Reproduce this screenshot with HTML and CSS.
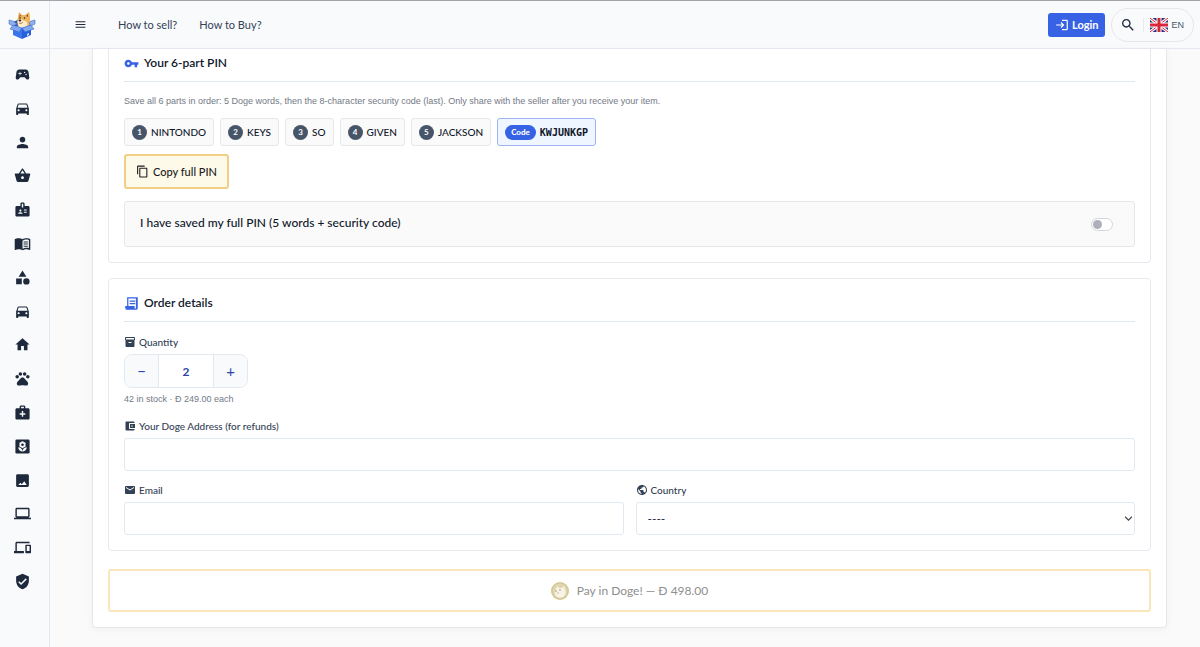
FILE: index.html
```html
<!DOCTYPE html>
<html lang="en">
<head>
    <meta charset="UTF-8">
    <meta name="viewport" content="width=device-width, initial-scale=1.0">
    <title>Checkout</title>
    <link rel="stylesheet" href="styles.css">
</head>
<body>
    <header class="topbar">
        <a class="logo" href="#" aria-label="Home">
            <svg viewBox="0 0 28 28">
                <path d="M5 11l9-4 9 4v4H5z" fill="#2b5bb8"/>
                <path d="M10 15c-1-3-1-6 0-9l1-5 3 3h3l4-3c1 3 1 5 1 8 1 2 0 5-1 7z" fill="#f0b55c"/>
                <path d="M12 3l1 2-2 1zM20 3l-2 2 2 1z" fill="#8a5527"/>
                <path d="M10 13c-1-2 0-4 2-5 2 0 3 2 5 2s3 3 2 6h-8z" fill="#fdeccb"/>
                <circle cx="12" cy="7" r=".8" fill="#222"/>
                <circle cx="16.500" cy="7" r=".8" fill="#222"/>
                <ellipse cx="12" cy="9.500" rx="1.300" ry=".9" fill="#222"/>
                <path d="M11 12c2 1 3 0 4-1" fill="none" stroke="#7a4a22" stroke-width=".7"/>
                <path d="M5 10L1 9l0 4 4 2 4-2zM23 10l4-1 0 4-4 2-2-3z" fill="#8fb0ea" stroke="#2f5fc4" stroke-width=".5"/>
                <path d="M5 14l9 3v11l-9-4z" fill="#3b74ec"/>
                <path d="M23 14l-9 3v11l9-4z" fill="#2860dc"/>
                <path d="M5 14l9 3-3 4-9-3zM23 14l-9 3 3 4 9-3z" fill="#7fa6f0" stroke="#2f5fc4" stroke-width=".5"/>
                <path d="M19 23l2-1v2l-2 1z" fill="#cfe0ff"/>
            </svg>
        </a>
        <button class="menu-btn" type="button" aria-label="Menu">
            <svg viewBox="0 0 24 24"><path d="M3 18h18v-2H3v2zm0-5h18v-2H3v2zm0-7v2h18V6H3z"/></svg>
        </button>
        <nav class="links">
            <a href="#">How to sell?</a>
            <a href="#">How to Buy?</a>
        </nav>
        <a class="login" href="#">
            <svg viewBox="0 0 24 24"><path d="M11 7L9.600 8.400l2.600 2.600H2v2h10.200l-2.600 2.600L11 17l5-5-5-5zm9 12h-8v2h8c1.100 0 2-.9 2-2V5c0-1.100-.9-2-2-2h-8v2h8v14z"/></svg>
            Login
        </a>
        <div class="tools">
            <button class="search" type="button" aria-label="Search">
                <svg viewBox="0 0 24 24"><path d="M15.500 14h-.79l-.28-.27C15.410 12.590 16 11.110 16 9.500 16 5.910 13.090 3 9.500 3S3 5.910 3 9.500 5.910 16 9.500 16c1.610 0 3.090-.59 4.230-1.570l.27.28v.79l5 4.990L20.490 19l-4.990-5zm-6 0C7.010 14 5 11.990 5 9.500S7.010 5 9.500 5 14 7.010 14 9.500 11.990 14 9.500 14z"/></svg>
            </button>
            <button class="lang" type="button">
                <svg viewBox="0 0 18 14">
                    <path d="M0 0h18v14H0z" fill="#29337a"/>
                    <path d="M0 0l18 14M18 0L0 14" stroke="#fff" stroke-width="3"/>
                    <path d="M0 0l18 14M18 0L0 14" stroke="#d8263c" stroke-width="1"/>
                    <path d="M9 0v14M0 7h18" stroke="#fff" stroke-width="5"/>
                    <path d="M9 0v14M0 7h18" stroke="#d8263c" stroke-width="3"/>
                </svg>
                EN
            </button>
        </div>
    </header>

    <div class="layout">
        <aside class="sidebar">
            <a href="#" aria-label="Games"><svg viewBox="0 0 24 24"><path d="M21.580 16.090l-1.090-7.660C20.210 6.460 18.520 5 16.530 5H7.470C5.480 5 3.790 6.460 3.510 8.430l-1.090 7.660C2.200 17.630 3.390 19 4.940 19c.68 0 1.320-.27 1.800-.75L9 16h6l2.250 2.250c.48.48 1.130.75 1.800.75 1.560 0 2.750-1.370 2.530-2.910zM11 11H9v2H8v-2H6v-1h2V8h1v2h2v1zm4-1c-.55 0-1-.45-1-1s.45-1 1-1 1 .45 1 1-.45 1-1 1zm2 3c-.55 0-1-.45-1-1s.45-1 1-1 1 .45 1 1-.45 1-1 1z"/></svg></a>
            <a href="#" aria-label="Cars"><svg viewBox="0 0 24 24"><path d="M18.920 6.010C18.720 5.420 18.160 5 17.500 5h-11c-.66 0-1.210.42-1.420 1.010L3 12v8c0 .55.45 1 1 1h1c.55 0 1-.45 1-1v-1h12v1c0 .55.45 1 1 1h1c.55 0 1-.45 1-1v-8l-2.080-5.990zM6.500 16c-.83 0-1.500-.67-1.500-1.500S5.670 13 6.500 13s1.500.67 1.500 1.500S7.330 16 6.500 16zm11 0c-.83 0-1.500-.67-1.500-1.500s.67-1.500 1.500-1.500 1.500.67 1.500 1.500-.67 1.500-1.500 1.500zM5 11l1.500-4.500h11L19 11H5z"/></svg></a>
            <a href="#" aria-label="Services"><svg viewBox="0 0 24 24"><path d="M12 12c2.210 0 4-1.790 4-4s-1.790-4-4-4-4 1.790-4 4 1.790 4 4 4zm0 2c-2.670 0-8 1.340-8 4v2h16v-2c0-2.660-5.330-4-8-4z"/></svg></a>
            <a href="#" aria-label="Groceries"><svg viewBox="0 0 24 24"><path d="M17.210 9l-4.380-6.560c-.19-.28-.51-.42-.83-.42-.32 0-.64.14-.83.43L6.790 9H2c-.55 0-1 .45-1 1 0 .09.01.18.04.27l2.540 9.270c.23.84 1 1.460 1.920 1.460h13c.92 0 1.690-.62 1.930-1.460l2.540-9.270L23 10c0-.55-.45-1-1-1h-4.790zM9 9l3-4.400L15 9H9zm3 8c-1.100 0-2-.9-2-2s.9-2 2-2 2 .9 2 2-.9 2-2 2z"/></svg></a>
            <a href="#" aria-label="Jobs"><svg viewBox="0 0 24 24"><path d="M20 7h-5V4c0-1.100-.9-2-2-2h-2c-1.100 0-2 .9-2 2v3H4c-1.100 0-2 .9-2 2v11c0 1.100.9 2 2 2h16c1.100 0 2-.9 2-2V9c0-1.100-.9-2-2-2zM9 12c.83 0 1.500.67 1.500 1.500S9.830 15 9 15s-1.500-.67-1.500-1.500S8.170 12 9 12zm3 6H6v-.75c0-1 2-1.500 3-1.500s3 .5 3 1.500V18zm1-9h-2V4h2v5zm5 7.500h-4V15h4v1.500zm0-3h-4V12h4v1.500z"/></svg></a>
            <a href="#" aria-label="Books"><svg viewBox="0 0 24 24"><path d="M21 5c-1.110-.35-2.330-.5-3.500-.5-1.950 0-4.050.4-5.500 1.500-1.450-1.100-3.550-1.500-5.500-1.500S2.450 4.900 1 6v14.650c0 .25.25.5.5.5.1 0 .15-.05.25-.05C3.100 20.450 5.050 20 6.500 20c1.950 0 4.050.4 5.500 1.500 1.350-.85 3.800-1.500 5.500-1.500 1.650 0 3.350.3 4.750 1.050.1.050.15.050.25.050.25 0 .5-.25.5-.5V6c-.6-.45-1.250-.75-2-1zm0 13.500c-1.100-.35-2.300-.5-3.500-.5-1.700 0-4.150.65-5.500 1.500V8c1.350-.85 3.800-1.500 5.500-1.500 1.200 0 2.400.15 3.500.5v11.500zM13.500 9h6v1.500h-6zm0 3h6v1.500h-6zm0 3h6v1.500h-6z"/></svg></a>
            <a href="#" aria-label="Other"><svg viewBox="0 0 24 24"><path d="M12 2l-5.500 9h11zM3 13.500h8v8H3z"/><circle cx="17.500" cy="17.500" r="4.500"/></svg></a>
            <a href="#" aria-label="Vehicles"><svg viewBox="0 0 24 24"><path d="M18.920 6.010C18.720 5.420 18.160 5 17.500 5h-11c-.66 0-1.210.42-1.420 1.010L3 12v8c0 .55.45 1 1 1h1c.55 0 1-.45 1-1v-1h12v1c0 .55.45 1 1 1h1c.55 0 1-.45 1-1v-8l-2.080-5.990zM6.500 16c-.83 0-1.500-.67-1.500-1.500S5.670 13 6.500 13s1.500.67 1.500 1.500S7.330 16 6.500 16zm11 0c-.83 0-1.500-.67-1.500-1.500s.67-1.500 1.500-1.500 1.500.67 1.500 1.500-.67 1.500-1.500 1.500zM5 11l1.500-4.500h11L19 11H5z"/></svg></a>
            <a href="#" aria-label="Real estate"><svg viewBox="0 0 24 24"><path d="M10 20v-6h4v6h5v-8h3L12 3 2 12h3v8z"/></svg></a>
            <a href="#" aria-label="Pets"><svg viewBox="0 0 24 24"><circle cx="4.500" cy="9.500" r="2.500"/><circle cx="9" cy="5.500" r="2.500"/><circle cx="15" cy="5.500" r="2.500"/><circle cx="19.500" cy="9.500" r="2.500"/><path d="M17.340 14.860c-.87-1.020-1.600-1.890-2.480-2.910-.46-.54-1.050-1.080-1.750-1.320-.11-.04-.22-.07-.33-.09-.25-.04-.52-.04-.78-.04s-.53 0-.79.050c-.11.020-.22.050-.33.090-.7.24-1.280.78-1.750 1.320-.87 1.020-1.600 1.890-2.480 2.910-1.310 1.310-2.920 2.760-2.620 4.790.29 1.020 1.020 2.030 2.330 2.320.73.15 3.060-.44 5.540-.44h.18c2.480 0 4.810.58 5.540.44 1.310-.29 2.040-1.310 2.330-2.320.31-2.040-1.300-3.490-2.610-4.800z"/></svg></a>
            <a href="#" aria-label="Health"><svg viewBox="0 0 24 24"><path d="M20 6h-4V4c0-1.100-.9-2-2-2h-4c-1.100 0-2 .9-2 2v2H4c-1.100 0-2 .9-2 2v12c0 1.100.9 2 2 2h16c1.100 0 2-.9 2-2V8c0-1.100-.9-2-2-2zM10 4h4v2h-4V4zm6 11h-3v3h-2v-3H8v-2h3v-3h2v3h3v2z"/></svg></a>
            <a href="#" aria-label="Garden"><svg viewBox="0 0 24 24"><rect x="2" y="2" width="20" height="20" rx="2"/><g fill="#f8fafc"><circle cx="12" cy="6.500" r="2"/><circle cx="9.500" cy="8" r="2"/><circle cx="14.500" cy="8" r="2"/><circle cx="9.500" cy="11" r="2"/><circle cx="14.500" cy="11" r="2"/><circle cx="12" cy="12.300" r="2"/><path d="M12 19c-3.300 0-6-2.500-6-6 3.300 0 6 2.500 6 6zM12 19c0-3.500 2.700-6 6-6 0 3.500-2.700 6-6 6z"/></g><circle cx="12" cy="9.500" r="1.800"/></svg></a>
            <a href="#" aria-label="Art"><svg viewBox="0 0 24 24"><path d="M21 19V5c0-1.100-.9-2-2-2H5c-1.100 0-2 .9-2 2v14c0 1.100.9 2 2 2h14c1.100 0 2-.9 2-2zM9 15l2 2.200 3.500-4.200L18 18.500H6z"/></svg></a>
            <a href="#" aria-label="Computers"><svg viewBox="0 0 24 24"><path d="M20 18c1.100 0 1.990-.9 1.990-2L22 6c0-1.100-.9-2-2-2H4c-1.100 0-2 .9-2 2v10c0 1.100.9 2 2 2H0v2h24v-2h-4zM4 6h16v10H4V6z"/></svg></a>
            <a href="#" aria-label="Electronics"><svg viewBox="0 0 24 24"><path d="M4 6h18V4H4c-1.100 0-2 .9-2 2v11H0v3h14v-3H4V6zm19 2h-6c-.55 0-1 .45-1 1v10c0 .55.45 1 1 1h6c.55 0 1-.45 1-1V9c0-.55-.45-1-1-1zm-1 9h-4v-7h4v7z"/></svg></a>
            <a href="#" aria-label="Safety"><svg viewBox="0 0 24 24"><path d="M12 1L3 5v6c0 5.550 3.840 10.740 9 12 5.160-1.260 9-6.450 9-12V5l-9-4zm-2 16l-4-4 1.410-1.410L10 14.170l6.590-6.590L18 9l-8 8z"/></svg></a>
        </aside>

        <main class="content">
            <form class="card">
                <section class="panel panel-pin">
                    <h2>
                        <svg viewBox="0 0 24 24"><path d="M12.650 10C11.830 7.670 9.610 6 7 6c-3.310 0-6 2.690-6 6s2.690 6 6 6c2.610 0 4.830-1.670 5.650-4H17v4h4v-4h2v-4H12.650zM7 14c-1.100 0-2-.9-2-2s.9-2 2-2 2 .9 2 2-.9 2-2 2z"/></svg>
                        Your 6-part PIN
                    </h2>
                    <p class="hint pin-hint">Save all 6 parts in order: 5 Doge words, then the 8-character security code (last). Only share with the seller after you receive your item.</p>
                    <div class="chips">
                        <span class="chip"><b>1</b>NINTONDO</span>
                        <span class="chip"><b>2</b>KEYS</span>
                        <span class="chip"><b>3</b>SO</span>
                        <span class="chip"><b>4</b>GIVEN</span>
                        <span class="chip"><b>5</b>JACKSON</span>
                        <span class="chip chip-code"><b>Code</b>KWJUNKGP</span>
                    </div>
                    <button class="copy" type="button">
                        <svg viewBox="0 0 24 24"><path d="M16 1H4c-1.100 0-2 .9-2 2v14h2V3h12V1zm3 4H8c-1.100 0-2 .9-2 2v14c0 1.100.9 2 2 2h11c1.100 0 2-.9 2-2V7c0-1.100-.9-2-2-2zm0 16H8V7h11v14z"/></svg>
                        Copy full PIN
                    </button>
                    <div class="confirm">
                        <label for="pinSaved">I have saved my full PIN (5 words + security code)</label>
                        <input type="checkbox" id="pinSaved" class="toggle">
                    </div>
                </section>

                <section class="panel">
                    <h2>
                        <svg viewBox="0 0 24 24"><path d="M5 2h17v17a3 3 0 0 1-3 3H5a3 3 0 0 1-3-3v-3h3zm2 2v12h10v3a1 1 0 0 0 2 0V4z" fill-rule="evenodd"/><path d="M9 7h9v2H9zm0 4h9v2H9z"/></svg>
                        Order details
                    </h2>
                    <div class="field">
                        <label for="quantity">
                            <svg viewBox="0 0 24 24"><path d="M20 2H4c-1 0-2 .9-2 2v3.010c0 .72.43 1.340 1 1.690V20c0 1.100 1.100 2 2 2h14c.9 0 2-.9 2-2V8.700c.57-.35 1-.97 1-1.690V4c0-1.100-1-2-2-2zm-5 12H9v-2h6v2zm5-7H4V4h16v3z"/></svg>
                            Quantity
                        </label>
                        <div class="stepper">
                            <button type="button" aria-label="Decrease">−</button>
                            <input type="text" inputmode="numeric" id="quantity" value="2">
                            <button type="button" aria-label="Increase">+</button>
                        </div>
                        <p class="hint stock">42 in stock · Đ 249.00 each</p>
                    </div>
                    <div class="field">
                        <label for="dogeAddress">
                            <svg viewBox="0 0 24 24"><path d="M21 18v1c0 1.100-.9 2-2 2H5c-1.110 0-2-.9-2-2V5c0-1.100.89-2 2-2h14c1.100 0 2 .9 2 2v1h-9c-1.110 0-2 .9-2 2v8c0 1.100.89 2 2 2h9zm-9-2h10V8H12v8zm4-2.500c-.83 0-1.500-.67-1.500-1.500s.67-1.500 1.500-1.500 1.500.67 1.500 1.500-.67 1.500-1.500 1.500z"/></svg>
                            Your Doge Address (for refunds)
                        </label>
                        <input type="text" id="dogeAddress" class="control">
                    </div>
                    <div class="row">
                        <div class="field">
                            <label for="email">
                                <svg viewBox="0 0 24 24"><path d="M20 4H4c-1.100 0-1.990.9-1.990 2L2 18c0 1.100.9 2 2 2h16c1.100 0 2-.9 2-2V6c0-1.100-.9-2-2-2zm0 4l-8 5-8-5V6l8 5 8-5v2z"/></svg>
                                Email
                            </label>
                            <input type="email" id="email" class="control">
                        </div>
                        <div class="field">
                            <label for="country">
                                <svg viewBox="0 0 24 24"><path d="M12 2C6.480 2 2 6.480 2 12s4.480 10 10 10 10-4.480 10-10S17.520 2 12 2zm-1 17.930c-3.950-.49-7-3.850-7-7.930 0-.62.08-1.210.21-1.790L9 15v1c0 1.100.9 2 2 2v1.930zm6.900-2.540c-.26-.81-1-1.390-1.900-1.390h-1v-3c0-.55-.45-1-1-1H8v-2h2c.55 0 1-.45 1-1V7h2c1.100 0 2-.9 2-2v-.41c2.930 1.190 5 4.060 5 7.410 0 2.080-.8 3.970-2.100 5.390z"/></svg>
                                Country
                            </label>
                            <div class="select-wrap">
                                <select id="country" class="control">
                                    <option>----</option>
                                </select>
                                <svg viewBox="0 0 8 6"><path d="M1 1l3 3 3-3" fill="none" stroke="#444" stroke-width="1"/></svg>
                            </div>
                        </div>
                    </div>
                </section>

                <button class="pay" type="submit" disabled>
                    <svg viewBox="0 0 18 18">
                        <circle cx="9" cy="9" r="9" fill="#d3c797"/>
                        <circle cx="9" cy="9" r="7.500" fill="#e0d6ae"/>
                        <path d="M5 14c-2-3-1-6 0-7l1-3 2 2h3l2-2 1 3c1 3 1 5-1 7-2 2-6 2-8 0z" fill="#f8f3e6"/>
                        <path d="M5 8v2M9 7v2" stroke="#a9a080" stroke-width="1"/>
                        <circle cx="7" cy="11" r="1" fill="#d6cdb0"/>
                    </svg>
                    Pay in Doge! — Đ 498.00
                </button>
            </form>
        </main>
    </div>
</body>
</html>
```
FILE: styles.css
```css
* {
    box-sizing: border-box;
}

body {
    margin: 0;
    min-height: 100vh;
    display: flex;
    flex-direction: column;
    font-family: Lato, "Liberation Sans", sans-serif;
    font-size: 12px;
    color: #1e293b;
    background: #fafafa;
}

button,
input,
select {
    font-family: inherit;
    color: inherit;
}

button {
    cursor: pointer;
}

svg {
    display: block;
    flex: none;
    fill: currentColor;
}

a {
    color: inherit;
    text-decoration: none;
}

/* top bar */
.topbar {
    display: flex;
    align-items: center;
    height: 49px;
    padding-right: 6px;
    background: #f8fafc;
    border-top: 1px solid #a3a5aa;
    border-bottom: 1px solid #e5e9ef;
}

.logo {
    display: flex;
    align-items: center;
    width: 50px;
    height: 100%;
    padding-left: 8px;
    border-right: 1px solid #e2e8f0;
}

.logo svg {
    width: 28px;
    height: 28px;
}

.menu-btn {
    margin-left: 24px;
    padding: 0;
    border: none;
    background: none;
}

.menu-btn svg {
    width: 13px;
    height: 13px;
}

.links {
    display: flex;
    gap: 22px;
    margin-left: 31px;
    margin-right: auto;
    font-size: 11px;
    color: #334155;
}

.login {
    display: flex;
    align-items: center;
    gap: 3px;
    height: 24px;
    padding: 0 7px;
    border-radius: 3px;
    background: #3662e3;
    color: #fff;
    font-size: 11px;
    font-weight: bold;
}

.login svg {
    width: 14px;
    height: 14px;
}

.tools {
    display: flex;
    align-items: center;
    height: 34px;
    margin-left: 6px;
    padding: 0 9px 0 8px;
    border: 1px solid #e5e7eb;
    border-radius: 17px;
}

.tools button {
    display: flex;
    align-items: center;
    padding: 0;
    border: none;
    background: none;
}

.search svg {
    width: 16px;
    height: 16px;
}

.tools .lang {
    gap: 3px;
    margin-left: 7px;
    padding-left: 6px;
    border-left: 1px solid #e8eaee;
    font-family: "Liberation Sans", Arial, sans-serif;
    font-size: 9px;
    color: #475569;
}

.lang svg {
    width: 18px;
    height: 14px;
}

/* layout */
.layout {
    flex: 1;
    display: flex;
}

.sidebar {
    flex: none;
    display: flex;
    flex-direction: column;
    align-items: center;
    justify-content: space-between;
    width: 50px;
    padding: 17px 5px 57px 0;
    background: #f8fafc;
    border-right: 1px solid #e2e8f0;
}

.sidebar svg {
    width: 17px;
    height: 17px;
}

.content {
    flex: 1;
    padding: 0 33px 19px 42px;
}

.card {
    display: flex;
    flex-direction: column;
    padding: 0 15px 15px;
    background: #fff;
    border: 1px solid #e5e7eb;
    border-top: none;
    border-radius: 0 0 4px 4px;
    box-shadow: 0 2px 8px rgba(0, 0, 0, 0.04);
}

.panel {
    margin-bottom: 18px;
    padding: 14px 15px 15px;
    border: 1px solid #e6eaef;
    border-radius: 4px;
}

.panel-pin {
    margin-bottom: 15px;
    padding-top: 4px;
    border-top: none;
    border-radius: 0 0 4px 4px;
}

h2 {
    display: flex;
    align-items: center;
    gap: 5px;
    margin: 0 0 12px;
    padding-bottom: 8px;
    border-bottom: 1px solid #e2e8f0;
    font-size: 12px;
    font-weight: 600;
    line-height: 20px;
    color: #0f172a;
}

h2 svg {
    width: 15px;
    height: 15px;
    color: #3662e3;
}

.hint {
    margin: 0;
    font-family: "Liberation Sans", Arial, sans-serif;
    font-size: 9px;
    line-height: 16px;
    color: #737985;
}

.pin-hint {
    margin: -1px 0 9px;
}

/* pin parts */
.chips {
    display: flex;
    flex-wrap: wrap;
    gap: 6px;
    margin-bottom: 8px;
}

.chip {
    display: flex;
    align-items: center;
    gap: 4px;
    height: 28px;
    padding: 0 7px;
    border: 1px solid #e5e7eb;
    border-radius: 3px;
    background: #fafafb;
    font-size: 10px;
    font-weight: 500;
    color: #0f172a;
}

.chip b {
    min-width: 15px;
    padding: 0 4px;
    border-radius: 8px;
    background: #475569;
    color: #fff;
    font-size: 8px;
    line-height: 15px;
    text-align: center;
}

.chip-code {
    border-color: #9db4f0;
    background: #eff6ff;
    font-family: "DejaVu Sans Mono", monospace;
    font-weight: bold;
}

.chip-code b {
    padding: 0 6px;
    background: #3662e3;
    font-family: Lato, sans-serif;
}

.copy {
    display: flex;
    align-items: center;
    gap: 4px;
    height: 35px;
    margin-bottom: 12px;
    padding: 0 10px;
    border: 2px solid #f3cf86;
    border-radius: 3px;
    background: #fefaea;
    font-size: 11px;
    font-weight: 500;
    color: #1c1c1c;
}

.copy svg {
    width: 13px;
    height: 13px;
}

.confirm {
    display: flex;
    align-items: center;
    justify-content: space-between;
    height: 46px;
    padding: 0 21px 0 15px;
    border: 1px solid #e5e7eb;
    border-radius: 3px;
    background: #fafafa;
    font-size: 12px;
    font-weight: 500;
    color: #0f172a;
}

.confirm label {
    padding-bottom: 3px;
}

.toggle {
    appearance: none;
    width: 22px;
    height: 13px;
    margin: 0;
    padding: 1px;
    border: 1px solid #d3d6dc;
    border-radius: 7px;
    background: #fff;
}

.toggle::before {
    content: "";
    display: block;
    width: 9px;
    height: 9px;
    border-radius: 50%;
    background: #adb0ba;
}

.toggle:checked::before {
    margin-left: auto;
    background: #3662e3;
}

/* order form */
.field + .field,
.field + .row {
    margin-top: 11px;
}

.row {
    display: flex;
    gap: 12px;
}

.row .field {
    flex: 1;
    margin-top: 0;
}

.field label {
    display: flex;
    align-items: center;
    gap: 3px;
    margin-bottom: 4px;
    font-size: 10px;
    font-weight: 500;
    line-height: 16px;
    color: #334155;
}

.field label svg {
    width: 12px;
    height: 12px;
}

.stepper {
    display: inline-flex;
    height: 34px;
    border: 1px solid #e2e8f0;
    border-radius: 8px;
    overflow: hidden;
    vertical-align: top;
    color: #2f46a8;
}

.stepper button {
    width: 33px;
    padding: 0;
    border: none;
    background: #f8fafc;
    font-size: 15px;
}

.stepper input {
    width: 56px;
    padding: 0;
    border: 1px solid #e2e8f0;
    border-width: 0 1px;
    background: #fff;
    font-size: 12px;
    font-weight: bold;
    text-align: center;
}

.stock {
    margin-top: 3px;
}

.control {
    display: block;
    width: 100%;
    height: 33px;
    padding: 0 11px;
    border: 1px solid #e2e8f0;
    border-radius: 3px;
    background: #fff;
    font-size: 12px;
}

.select-wrap {
    position: relative;
}

.select-wrap .control {
    appearance: none;
}

.select-wrap svg {
    position: absolute;
    right: 2px;
    top: 13px;
    width: 9px;
    height: 8px;
    pointer-events: none;
}

.pay {
    display: flex;
    align-items: center;
    justify-content: center;
    gap: 8px;
    height: 43px;
    border: 2px solid #fae6b8;
    border-radius: 3px;
    background: #fff;
    color: #8e8e8e;
    font-size: 12px;
}

.pay svg {
    width: 18px;
    height: 18px;
}
```
